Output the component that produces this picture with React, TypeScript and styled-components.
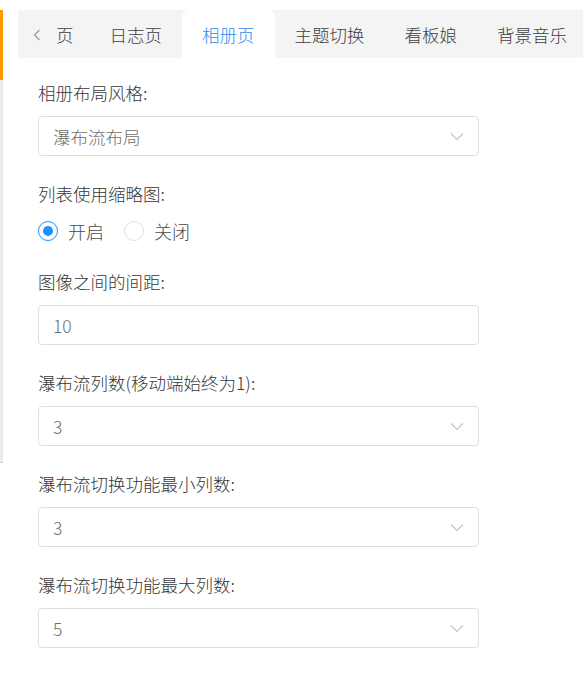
import styled, { createGlobalStyle } from "styled-components";

const GlobalStyle = createGlobalStyle`
    html, body {
        margin: 0;
        padding: 0;
        background: #ffffff;
        font-family: "Noto Sans CJK SC", "Liberation Sans", sans-serif;
    }
`;

const Page = styled.div`
    width: 583px;
    height: 690px;
    display: flex;
    overflow: hidden;
    padding-top: 10px;
    box-sizing: border-box;
`;

const Rail = styled.div`
    width: 3px;
    height: 452px;
    flex-shrink: 0;
    display: flex;
    flex-direction: column;
    background: #ececec;
    border-bottom: 1px solid #a9d4f0;
`;

const RailMark = styled.div`
    height: 70px;
    background: #ff9a00;
`;

const Panel = styled.div`
    flex: 1;
    min-width: 0;
    margin-left: 15px;
`;

const TabBar = styled.div`
    height: 48px;
    display: flex;
    align-items: stretch;
    background: #f4f4f4;
    white-space: nowrap;
`;

const Tab = styled.div<{ $active?: boolean }>`
    padding: 0 20px;
    display: flex;
    align-items: center;
    font-size: 17.5px;
    font-weight: 300;
    color: ${(p) => (p.$active ? "#2d8cf0" : "#3e3e3e")};
    background: ${(p) => (p.$active ? "#ffffff" : "transparent")};
    border-radius: ${(p) => (p.$active ? "7px 7px 0 0" : "0")};
    flex-shrink: 0;
`;

const PrevTab = styled(Tab)`
    padding: 0 16px 0 15px;
    gap: 15px;
`;

const Chevron = styled.svg`
    width: 8px;
    height: 12px;
    margin-top: 2px;
`;

const Form = styled.div`
    width: 441px;
    padding: 23px 0 0 20px;
`;

const FormItem = styled.div`
    margin-bottom: 26px;
`;

const Label = styled.div`
    height: 24px;
    line-height: 24px;
    font-size: 17.5px;
    font-weight: 300;
    color: #363636;
    margin-bottom: 11px;
    white-space: nowrap;
`;

const Field = styled.div`
    height: 40px;
    box-sizing: border-box;
    border: 1px solid #dcdfe6;
    border-radius: 4px;
    padding: 0 14px;
    display: flex;
    align-items: center;
    justify-content: space-between;
    font-size: 17.5px;
    font-weight: 300;
    color: #6e6e6e;
`;

const Arrow = styled.svg`
    width: 14px;
    height: 14px;
`;

const RadioGroup = styled.div`
    height: 27px;
    display: flex;
    align-items: center;
    gap: 20px;
`;

const RadioOption = styled.div`
    display: flex;
    align-items: center;
    gap: 10px;
    font-size: 18px;
    font-weight: 300;
    color: #4a4a4a;
`;

const RadioCircle = styled.span<{ $checked?: boolean }>`
    width: 20px;
    height: 20px;
    box-sizing: border-box;
    border-radius: 50%;
    border: 1px solid ${(p) => (p.$checked ? "#1e90ff" : "#dcdfe6")};
    display: flex;
    align-items: center;
    justify-content: center;

    &::after {
        content: "";
        width: 10px;
        height: 10px;
        border-radius: 50%;
        background: ${(p) => (p.$checked ? "#1e90ff" : "transparent")};
    }
`;

const tabs = ["日志页", "相册页", "主题切换", "看板娘", "背景音乐"];

function SelectField({ value }: { value: string }) {
    return (
        <Field>
            <span>{value}</span>
            <Arrow viewBox="0 0 14 14">
                <path d="M1 4.5 L7 10.5 L13 4.5" fill="none" stroke="#c0c4cc" strokeWidth="1.1" />
            </Arrow>
        </Field>
    );
}

export default function App() {
    return (
        <>
            <GlobalStyle />
            <Page>
                <Rail>
                    <RailMark />
                </Rail>
                <Panel>
                    <TabBar>
                        <PrevTab>
                            <Chevron viewBox="0 0 8 12">
                                <path d="M6.5 1 L1.5 6 L6.5 11" fill="none" stroke="#9a9a9a" strokeWidth="1.2" />
                            </Chevron>
                            页
                        </PrevTab>
                        {tabs.map((t) => (
                            <Tab key={t} $active={t === "相册页"}>{t}</Tab>
                        ))}
                    </TabBar>
                    <Form>
                        <FormItem>
                            <Label>相册布局风格:</Label>
                            <SelectField value="瀑布流布局" />
                        </FormItem>
                        <FormItem>
                            <Label>列表使用缩略图:</Label>
                            <RadioGroup>
                                <RadioOption>
                                    <RadioCircle $checked />
                                    开启
                                </RadioOption>
                                <RadioOption>
                                    <RadioCircle />
                                    关闭
                                </RadioOption>
                            </RadioGroup>
                        </FormItem>
                        <FormItem>
                            <Label>图像之间的间距:</Label>
                            <Field>10</Field>
                        </FormItem>
                        <FormItem>
                            <Label>瀑布流列数(移动端始终为1):</Label>
                            <SelectField value="3" />
                        </FormItem>
                        <FormItem>
                            <Label>瀑布流切换功能最小列数:</Label>
                            <SelectField value="3" />
                        </FormItem>
                        <FormItem>
                            <Label>瀑布流切换功能最大列数:</Label>
                            <SelectField value="5" />
                        </FormItem>
                    </Form>
                </Panel>
            </Page>
        </>
    );
}
